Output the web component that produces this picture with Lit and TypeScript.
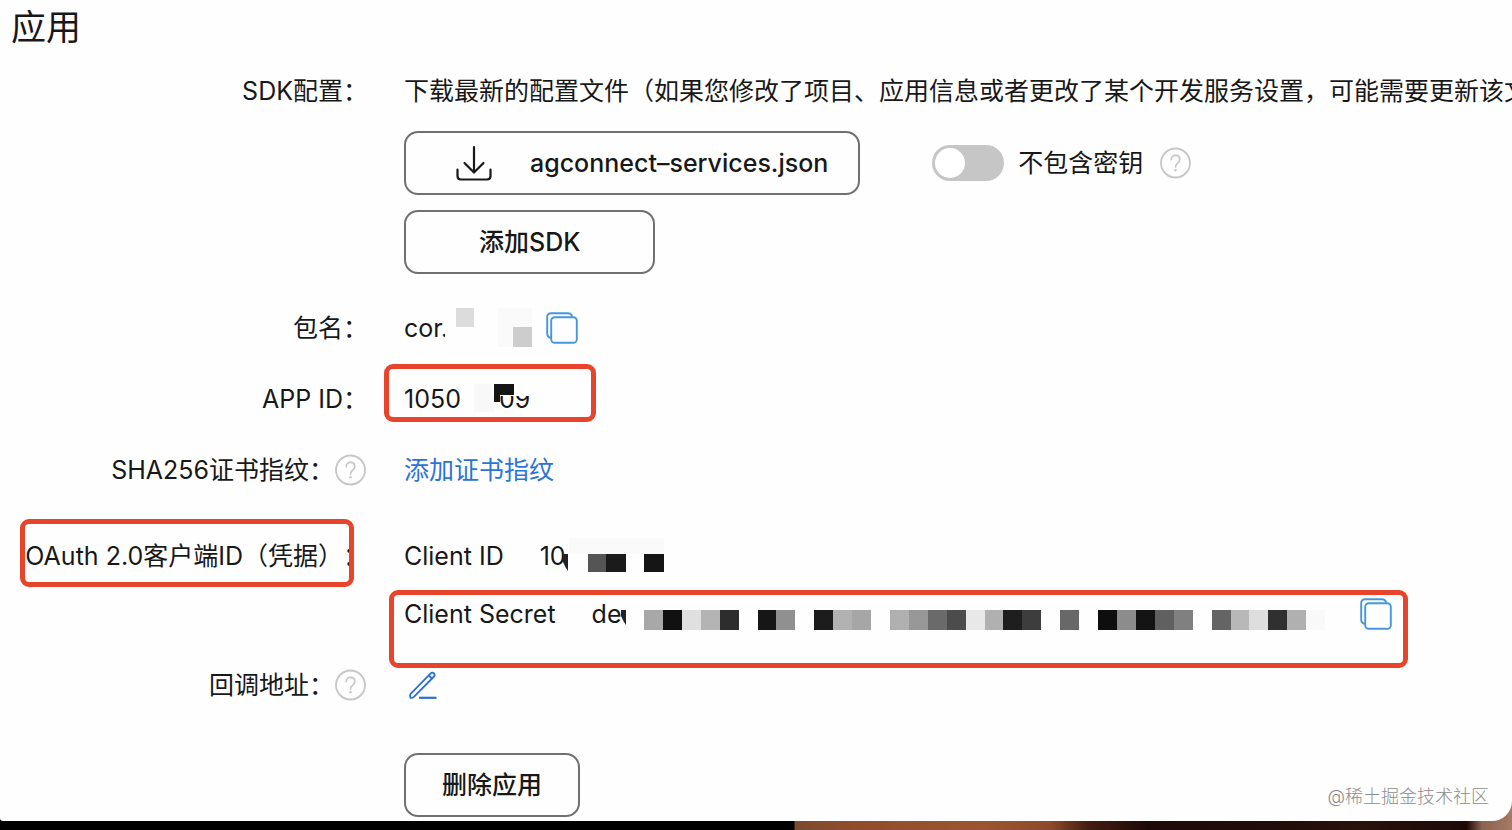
import { LitElement, html, svg, css } from "lit";
import { customElement, state } from "lit/decorators.js";

const SECRET_BLOCKS: (string | null)[] = [
  "#a8a8a8", "#111", "#e0e0e0", "#b4b4b4", "#2d2d2d", null,
  "#161616", "#909090", null,
  "#1c1c1c", "#b2b2b2", "#a6a6a6", null,
  "#b0b0b0", "#989898", "#6a6a6a", "#4c4c4c", "#e8e8e8", "#b0b0b0", "#1e1e1e", "#3d3d3d", null,
  "#686868", null,
  "#0e0e0e", "#8c8c8c", "#141414", "#606060", "#808080", null,
  "#646464", "#b8b8b8", "#dedede", "#303030", "#b0b0b0", "#f9f9f9",
];

@customElement("help-button")
class HelpButton extends LitElement {
  static styles = css`
    :host { display: inline-flex; flex: none; }
    .help { display: flex; border: 0; padding: 0; background: none; color: #c6c6c6; cursor: pointer; }
  `;
  render() {
    return html`<button class="help" type="button" aria-label="帮助">
      <svg width="32" height="32" viewBox="0 0 32 32" fill="none" stroke="currentColor">
        <circle cx="16.500" cy="16" r="14.5" stroke-width="1.8"></circle>
        <path d="M12.200 12.6c0-2.6 1.8-4.2 4.3-4.2s4.3 1.6 4.3 4c0 1.800-.9 2.800-2.300 3.900-1.300 1-2 1.800-2 3.700" stroke-width="1.7" stroke-linecap="round"></path>
        <circle cx="16.500" cy="23.200" r="1.200" fill="currentColor" stroke="none"></circle>
      </svg>
    </button>`;
  }
}

@customElement("copy-button")
class CopyButton extends LitElement {
  static styles = css`
    :host { display: inline-flex; flex: none; }
    .copy { display: flex; border: 0; padding: 0; background: none; color: #4596dc; cursor: pointer; }
  `;
  render() {
    return html`<button class="copy" type="button" aria-label="复制">
      <svg width="32" height="32" viewBox="0 0 32 32" fill="none" stroke="currentColor" stroke-width="1.9">
        <path d="M5 26C2.600 25.500 1.200 24 1.200 21.500V5C1.200 2.600 2.800 1.200 5 1.200H22C24.200 1.200 25.800 2.600 26.200 5"></path>
        <rect x="5.200" y="5.200" width="25.600" height="25.600" rx="3.600"></rect>
      </svg>
    </button>`;
  }
}

@customElement("app-root")
class AppRoot extends LitElement {
  @state() private withoutKey = false;

  static styles = css`
    :host {
      display: flex;
      flex-direction: column;
      min-height: 100vh;
      box-sizing: border-box;
      padding-bottom: 9px;
      overflow: hidden;
      background: linear-gradient(90deg,
        #000 52.5%, #7c4a30 52.6%, #8f4c2b 56%, #9c552f 65%, #8c4a2b 69.5%, #431d12 72%,
        #1d0907 76%, #200c09 84%, #2a110c 90%, #1c0907 97%, #8b6250 98%, #a67a64 100%);
      color: #181818;
      font-family: Inter, "Noto Sans CJK SC", sans-serif;
      font-size: 25px;
      line-height: 36px;
      text-spacing-trim: space-all;
    }
    .card {
      position: relative;
      flex: 1;
      overflow: hidden;
      background: #fefefe;
      border-radius: 0 0 20px 3px;
    }
    .title { margin: 0; padding: 5px 11px 24px; font-size: 35px; line-height: 44px; font-weight: 400; }
    .form { display: flex; flex-direction: column; gap: 35px; }
    .row { display: grid; grid-template-columns: 368px minmax(0, 1fr); column-gap: 36px; }
    .spaced { margin-top: 15px; }
    .label { display: flex; justify-content: flex-end; align-items: center; height: 36px; white-space: nowrap; }
    .with-help { padding-right: 2px; }
    .mark { position: relative; }
    .stack { display: flex; flex-direction: column; align-items: flex-start; gap: 15px; padding-bottom: 1px; }
    .desc { margin: 0 0 7px; white-space: nowrap; }
    .line { display: flex; align-items: center; }
    .btn {
      display: flex; align-items: center; justify-content: center;
      height: 64px; box-sizing: border-box; padding: 0 36px;
      border: 2px solid #707070; border-radius: 14px;
      background: none; color: inherit; font: inherit; font-weight: 500; cursor: pointer;
    }
    .download { gap: 38px; padding: 0 30px 0 50px; }
    .wide { padding: 0 73px; }
    .toggle { display: flex; align-items: center; gap: 14px; margin: 0 16px 0 72px; white-space: nowrap; }
    .switch {
      appearance: none; display: flex; width: 72px; height: 36px; box-sizing: border-box;
      margin: 0; padding: 3px; border-radius: 18px; background: #c6c6c6; cursor: pointer;
    }
    .switch::before { content: ""; width: 30px; height: 30px; border-radius: 50%; background: #fff; }
    .switch:checked { justify-content: flex-end; background: #2a74d8; }
    .value { position: relative; display: flex; align-items: center; height: 36px; white-space: nowrap; }
    .pair { display: flex; flex-direction: column; gap: 22px; }
    .name { margin-right: 36px; }
    .mosaic { display: block; flex: none; overflow: visible; }
    .copy-near { margin-left: 14px; }
    .copy-far { margin-left: 34px; }
    .tail { margin-left: 38px; }
    .over { position: absolute; left: 58px; top: 0; }
    .box { position: absolute; border: 5px solid #e8432b; border-radius: 9px; box-sizing: border-box; pointer-events: none; }
    .box-id { left: -20px; top: -17px; width: 212px; height: 58px; }
    .box-oauth { left: 20px; right: 14px; top: -19px; height: 68px; }
    .box-secret { left: -15px; top: -6px; width: 1019px; height: 78px; }
    .link { color: #2a74d8; text-decoration: none; }
    .edit { display: flex; border: 0; padding: 0 0 0 4px; background: none; color: #2a70cf; cursor: pointer; }
    .watermark {
      position: absolute; right: 23px; bottom: 10px; color: #8c8c8c;
      font-size: 18px; line-height: 28px; font-weight: 300;
    }
  `;

  private secretMosaic() {
    return svg`${SECRET_BLOCKS.map((fill, i) => {
      const x = 23 + Math.round(i * 18.92);
      const next = 23 + Math.round((i + 1) * 18.92);
      return fill ? svg`<rect x=${x} y="14" width=${next - x} height="20" fill=${fill}></rect>` : null;
    })}`;
  }

  render() {
    return html`
      <main class="card">
        <h1 class="title">应用</h1>
        <div class="form">
          <div class="row">
            <div class="label">SDK配置：</div>
            <div class="stack">
              <p class="desc">下载最新的配置文件（如果您修改了项目、应用信息或者更改了某个开发服务设置，可能需要更新该文</p>
              <div class="line">
                <button class="btn download" type="button">
                  <svg width="36" height="36" viewBox="0 0 36 36" fill="none" stroke="currentColor" stroke-width="2.2" stroke-linecap="round" stroke-linejoin="round">
                    <path d="M18 2V27M8.500 18L18 27.500 27.500 18"></path>
                    <path d="M1.500 24.500V31Q1.500 34.500 5 34.500H31Q34.500 34.500 34.500 31V24.500"></path>
                  </svg>
                  <span>agconnect–services.json</span>
                </button>
                <label class="toggle">
                  <input class="switch" type="checkbox" role="switch" .checked=${this.withoutKey}
                    @change=${(e: Event) => { this.withoutKey = (e.target as HTMLInputElement).checked; }} />
                  <span>不包含密钥</span>
                </label>
                <help-button></help-button>
              </div>
              <button class="btn wide" type="button">添加SDK</button>
            </div>
          </div>

          <div class="row">
            <div class="label">包名：</div>
            <div class="value">
              <span>cor.</span>
              <svg class="mosaic" width="84" height="36" viewBox="0 0 84 36">
                <rect x="50" y="-2" width="34" height="39" fill="#fafafa"></rect>
                <rect x="8" y="-2" width="18" height="19" fill="#dcdcdc"></rect>
                <rect x="65" y="17" width="19" height="20" fill="#cdcdcd"></rect>
                <rect x="-3" y="10" width="6" height="20" fill="#fefefe"></rect>
              </svg>
              <copy-button class="copy-near"></copy-button>
            </div>
          </div>

          <div class="row">
            <div class="label">APP ID：</div>
            <div class="value">
              <span>1050</span><span class="tail">09</span>
              <svg class="mosaic over" width="76" height="36" viewBox="0 0 76 36">
                <rect x="12" y="3" width="20" height="28" fill="#f8f8f8"></rect>
                <rect x="30" y="2" width="42" height="13" fill="#fefefe"></rect>
                <path d="M32 3H52V14H38V21H32Z" fill="#151515"></path>
              </svg>
              <span class="box box-id"></span>
            </div>
          </div>

          <div class="row">
            <div class="label with-help">SHA256证书指纹：<help-button></help-button></div>
            <div class="value"><a class="link" href="#fingerprint">添加证书指纹</a></div>
          </div>

          <div class="row spaced">
            <div class="label mark">OAuth 2.0客户端ID（凭据）：<span class="box box-oauth"></span></div>
            <div class="pair">
              <div class="value">
                <span class="name">Client ID</span><span>10</span>
                <svg class="mosaic" width="100" height="36" viewBox="3 0 100 36">
                  <rect x="6" y="0" width="95" height="16" fill="#fafafa"></rect>
                  <path d="M0 16H5V33Q2 29 0 24Z" fill="#222"></path>
                  <rect x="25" y="16" width="18" height="18" fill="#555"></rect>
                  <rect x="43" y="16" width="20" height="18" fill="#1b1b1b"></rect>
                  <rect x="81" y="16" width="20" height="18" fill="#151515"></rect>
                </svg>
              </div>
              <div class="value">
                <span class="name">Client Secret</span><span>de</span>
                <svg class="mosaic" width="705" height="36" viewBox="0 0 705 36">
                  <path d="M0 14H5V29Q2 25 0 20Z" fill="#222"></path>
                  ${this.secretMosaic()}
                </svg>
                <copy-button class="copy-far"></copy-button>
                <span class="box box-secret"></span>
              </div>
            </div>
          </div>

          <div class="row">
            <div class="label with-help">回调地址：<help-button></help-button></div>
            <div class="value">
              <button class="edit" type="button" aria-label="编辑">
                <svg width="30" height="30" viewBox="0 0 30 30" fill="none" stroke="currentColor" stroke-width="1.800" stroke-linejoin="round">
                  <path d="M2.400 24.200L22.700 3.300Q24.200 1.900 25.900 3.300 27.400 4.900 26 6.500L5.600 27.200Q4.400 28.300 2.600 27.800 1.400 26 2.400 24.200Z"></path>
                  <path d="M20.800 5.300L24 8.500"></path>
                  <path d="M11 27.800H28.500" stroke-width="2.200"></path>
                </svg>
              </button>
            </div>
          </div>

          <div class="row spaced">
            <div></div>
            <div class="stack"><button class="btn" type="button">删除应用</button></div>
          </div>
        </div>
        <div class="watermark">@稀土掘金技术社区</div>
      </main>
    `;
  }
}
